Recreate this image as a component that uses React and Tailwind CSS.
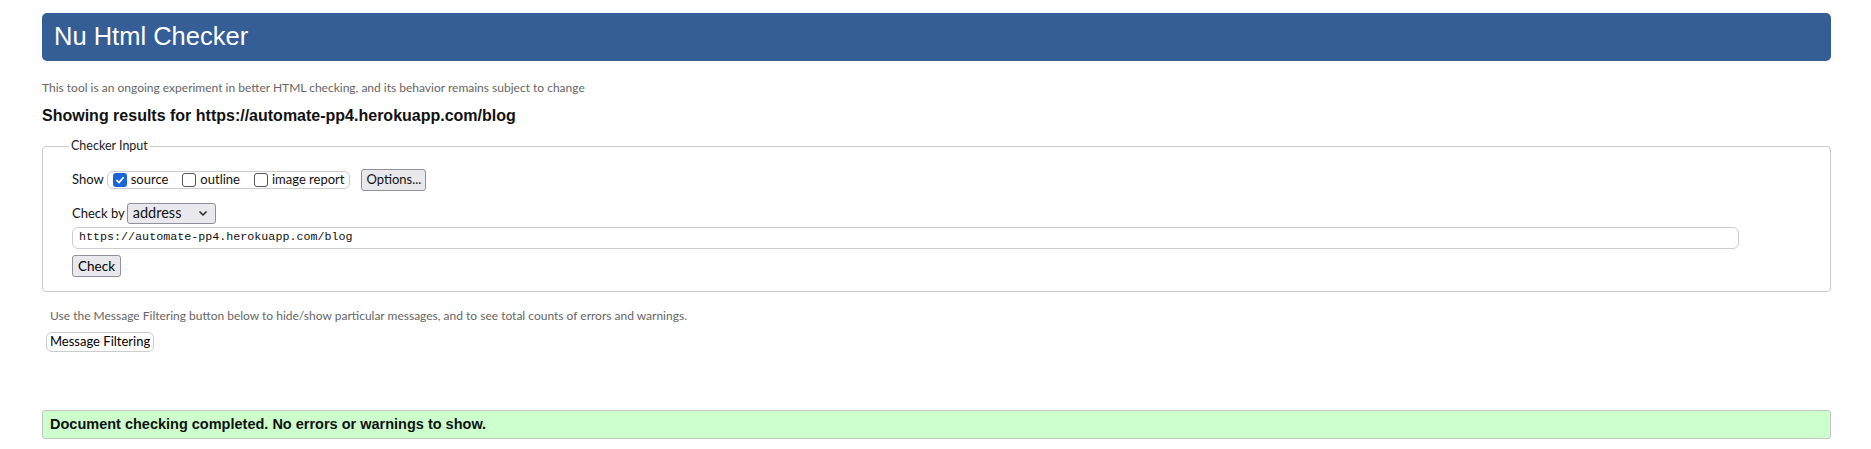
import React from 'react';

function Box({ checked, label }) {
  return (
    <label className="flex items-center gap-[4px] mr-[14px] last:mr-0">
      {checked ? (
        <span className="flex items-center justify-center w-[14px] h-[14px] rounded-[3px] bg-[#1a63d8]">
          <svg width="10" height="10" viewBox="0 0 10 10">
            <path d="M1.5 5.2 L4 7.6 L8.6 2.2" fill="none" stroke="#fff" strokeWidth="1.7" />
          </svg>
        </span>
      ) : (
        <span className="w-[14px] h-[14px] rounded-[3px] border border-[#555] bg-white" />
      )}
      <span>{label}</span>
    </label>
  );
}

export default function App() {
  const sans = { fontFamily: '"Liberation Sans", Arial, sans-serif' };
  const ui = { fontFamily: 'Lato, "Open Sans", sans-serif' };

  return (
    <div className="pl-[42px] pr-[40px] pt-[13px] bg-white min-h-[449px] text-black" style={sans}>
      {/* Header */}
      <div className="h-[48px] flex items-center px-[12px] bg-[#365e96] rounded-[5px]">
        <h1 className="text-[25.5px] text-white font-normal leading-none">Nu Html Checker</h1>
      </div>

      <p className="mt-[20px] text-[12px] text-[#666] leading-[14px]" style={ui}>
        This tool is an ongoing experiment in better HTML checking, and its behavior remains subject to change
      </p>

      <h2 className="mt-[12px] text-[16px] font-bold text-[#111] leading-[18px]">
        Showing results for https://automate-pp4.herokuapp.com/blog
      </h2>

      {/* Checker input */}
      <fieldset className="mt-[12px] border border-[#ccc] rounded-[4px] pl-[29px] pr-[10px] pb-[14px] pt-[13px]" style={ui}>
        <legend className="-ml-[3px] px-[2px] text-[12.5px] text-[#222]">Checker Input</legend>

        <div className="flex items-center text-[13px] text-[#111]">
          <span className="mr-[3px]">Show</span>
          <div className="flex items-center h-[18px] px-[5px] border border-[#ccc] rounded-[6px]">
            <Box checked label="source" />
            <Box label="outline" />
            <Box label="image report" />
          </div>
          <button className="ml-[11px] h-[22px] px-[4px] bg-[#e9e9ed] border border-[#8f8f9d] rounded-[3px] text-[13px]">
            Options...
          </button>
        </div>

        <div className="flex items-center mt-[12px] text-[13px] text-[#111]">
          <span className="mr-[2px]">Check by</span>
          <div className="flex items-center justify-between w-[89px] h-[21px] pl-[5px] pr-[7px] bg-[#e9e9ed] border border-[#8f8f9d] rounded-[3px] text-[14.5px]">
            <span>address</span>
            <svg width="10" height="7" viewBox="0 0 10 7">
              <path d="M1.5 1.5 L5 5 L8.5 1.5" fill="none" stroke="#222" strokeWidth="1.5" />
            </svg>
          </div>
        </div>

        <div
          className="mt-[3px] w-[1667px] h-[22px] flex items-center px-[6px] border border-[#ccc] rounded-[6px] text-[11.7px] text-[#111]"
          style={{ fontFamily: '"Liberation Mono", "DejaVu Sans Mono", monospace' }}
        >
          https://automate-pp4.herokuapp.com/blog
        </div>

        <button className="mt-[6px] h-[22px] px-[5px] bg-[#e9e9ed] border border-[#8f8f9d] rounded-[3px] text-[13.5px]">
          Check
        </button>
      </fieldset>

      <p className="mt-[17px] ml-[8px] text-[12px] text-[#666] leading-[14px]" style={ui}>
        Use the Message Filtering button below to hide/show particular messages, and to see total counts of errors and warnings.
      </p>

      <button
        className="mt-[9px] ml-[4px] h-[20px] px-[3px] bg-white border border-[#ccc] rounded-[6px] text-[13px] leading-none"
        style={ui}
      >
        Message Filtering
      </button>

      <div className="mt-[57px] h-[29px] flex items-center px-[7px] bg-[#ccffcc] border border-[#c4c4c4] rounded-[3px]">
        <p className="text-[14.5px] font-bold text-[#111]">
          Document checking completed. No errors or warnings to show.
        </p>
      </div>
    </div>
  );
}
